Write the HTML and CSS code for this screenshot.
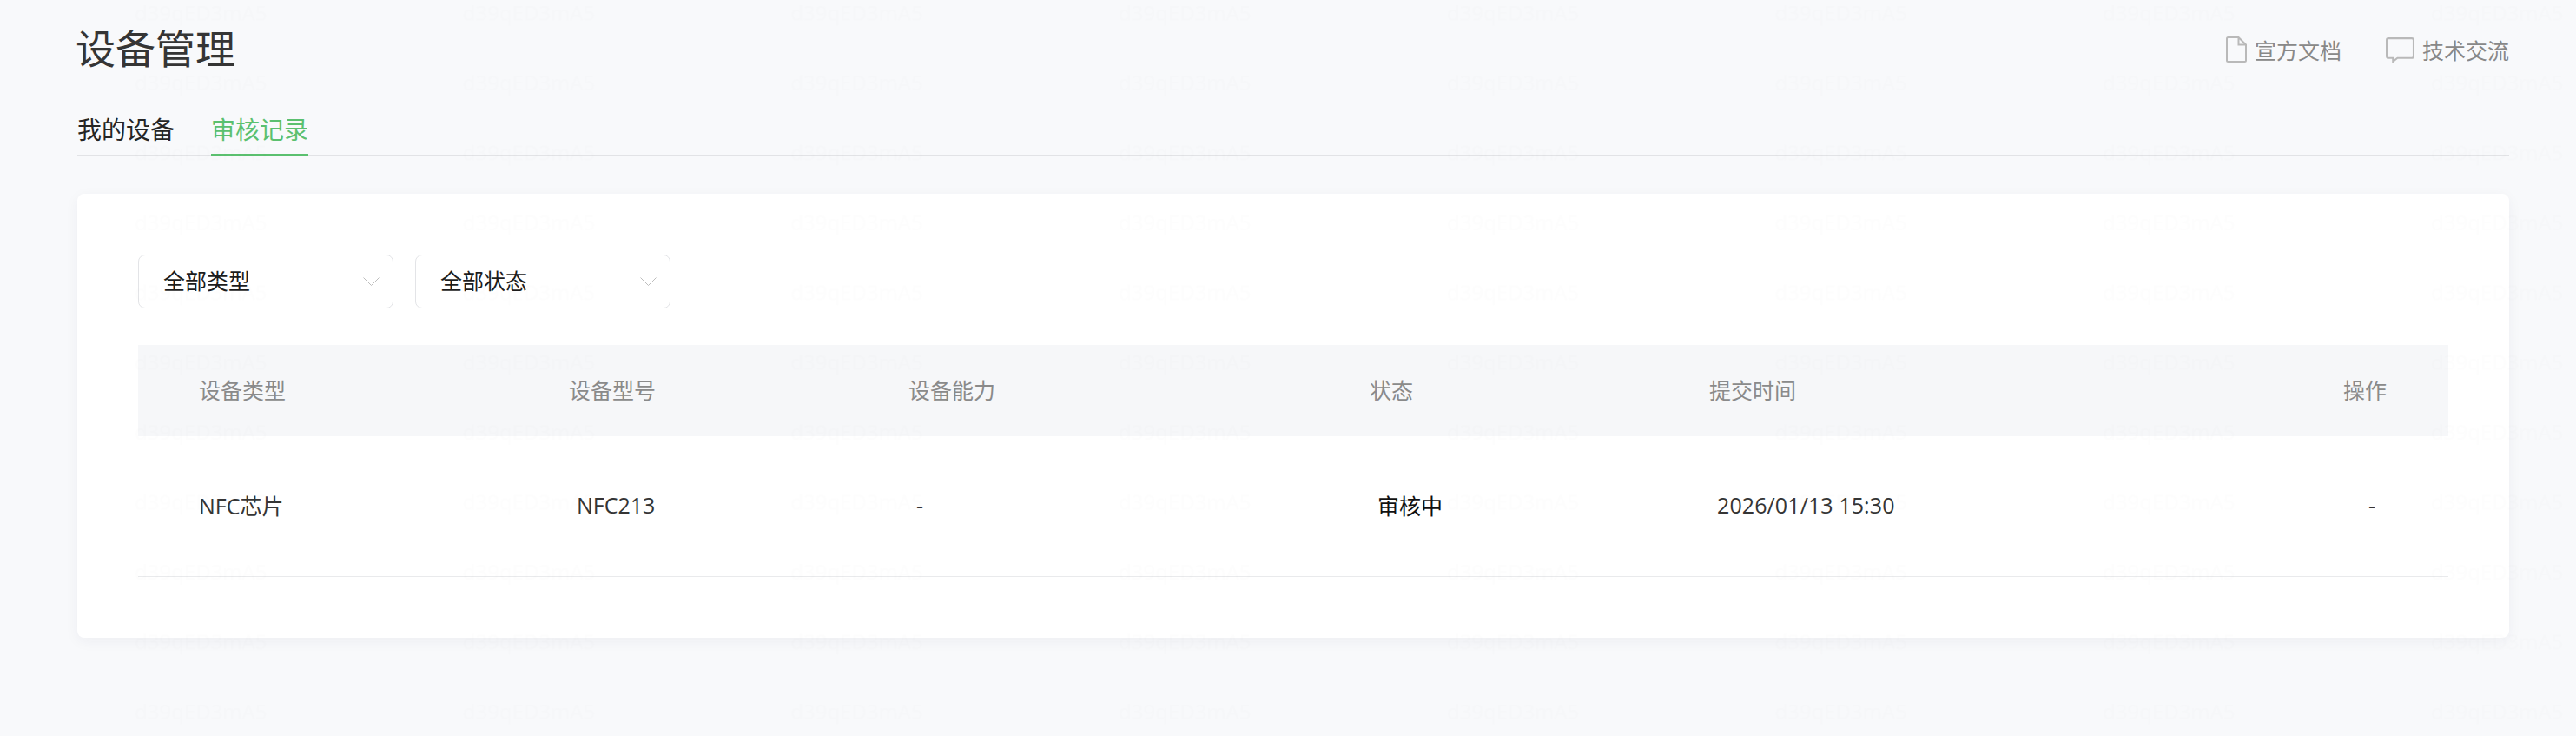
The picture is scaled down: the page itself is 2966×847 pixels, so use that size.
FILE: index.html
```html
<!DOCTYPE html>
<html lang="zh-CN">
<head>
<meta charset="utf-8">
<title>设备管理</title>
<link rel="stylesheet" href="styles.css">
</head>
<body>
<main class="page">
  <header class="topbar">
    <h1 class="title">设备管理</h1>
    <nav class="links">
      <a class="link">
        <svg class="icon-doc" viewBox="0 0 24 30" fill="none"><path d="M2.5 1h12L23 9.5V27.5a1.5 1.5 0 0 1-1.5 1.5h-19A1.5 1.5 0 0 1 1 27.5V2.5A1.5 1.5 0 0 1 2.5 1z M14.5 1v8.5H23"/></svg>
        <span>宣方文档</span>
      </a>
      <a class="link">
        <svg class="icon-chat" viewBox="0 0 32 28" fill="none"><path d="M3 1h26a2 2 0 0 1 2 2v18a2 2 0 0 1-2 2H13l-5 4v-4H3a2 2 0 0 1-2-2V3a2 2 0 0 1 2-2z"/></svg>
        <span>技术交流</span>
      </a>
    </nav>
  </header>
  <div class="tabs">
    <a class="tab">我的设备</a>
    <a class="tab tab-active">审核记录</a>
  </div>
  <section class="card">
    <div class="filters">
      <div class="select"><span>全部类型</span><svg class="chevron" viewBox="0 0 19 10" fill="none"><path d="M.5.5l9 9 9-9"/></svg></div>
      <div class="select"><span>全部状态</span><svg class="chevron" viewBox="0 0 19 10" fill="none"><path d="M.5.5l9 9 9-9"/></svg></div>
    </div>
    <div class="table">
      <div class="row row-head">
        <div class="cell">设备类型</div>
        <div class="cell">设备型号</div>
        <div class="cell">设备能力</div>
        <div class="cell">状态</div>
        <div class="cell">提交时间</div>
        <div class="cell cell-end">操作</div>
      </div>
      <div class="row row-body">
        <div class="cell cell-latin">NFC芯片</div>
        <div class="cell cell-inset">NFC213</div>
        <div class="cell cell-inset">-</div>
        <div class="cell cell-inset cell-strong">审核中</div>
        <div class="cell cell-inset cell-date">2026/01/13 15:30</div>
        <div class="cell cell-end cell-dash">-</div>
      </div>
    </div>
  </section>
</main>
<svg class="watermark" aria-hidden="true">
  <defs>
    <pattern id="wm" x="155" y="-16" width="377.7" height="80.4" patternUnits="userSpaceOnUse">
      <text class="wm-text" x="0" y="40">d39qED3mA5</text>
    </pattern>
  </defs>
  <rect width="100%" height="100%" fill="url(#wm)"/>
</svg>
</body>
</html>
```
FILE: styles.css
```css
* { box-sizing: border-box; }
html, body { margin: 0; height: 100%; }
body {
  background: #f8f9fb;
  color: #353535;
  font-family: "Open Sans", "Noto Sans CJK SC", sans-serif;
  font-size: 25px;
  overflow: hidden;
}
.page { padding: 0 77px 0 89px; }
.topbar {
  display: flex;
  justify-content: space-between;
  align-items: center;
  height: 112px;
  padding-bottom: 2px;
}
.title { margin: 0 0 0 -2px; font-size: 46px; font-weight: 400; line-height: 60px; color: #353535; }
.links { display: flex; gap: 51px; color: #888; padding-top: 4px; }
.link { display: flex; align-items: center; gap: 9px; }
.icon-doc { width: 24px; height: 30px; }
.icon-chat { width: 33px; height: 29px; }
.icon-doc path, .icon-chat path { stroke: #b9b9b9; stroke-width: 2; }
.tabs {
  display: flex;
  gap: 42px;
  height: 67px;
  border-bottom: 1px solid #e2e3e6;
  font-size: 28px;
  line-height: 74px;
  color: #252525;
}
.tab { height: 68px; }
.tab-active { color: #5bc06f; border-bottom: 3px solid #5bc06f; }
.card {
  margin-top: 44px;
  height: 511px;
  padding: 70px 70px 0;
  background: #fff;
  border-radius: 8px;
  box-shadow: 0 4px 16px rgba(30, 40, 70, .05);
}
.filters { display: flex; gap: 25px; }
.select {
  display: flex;
  align-items: center;
  justify-content: space-between;
  width: 294px;
  height: 62px;
  padding: 0 15px 4px 28px;
  border: 1px solid #e3e4e7;
  border-radius: 8px;
  color: #1c1c1c;
}
.chevron { width: 19px; height: 10px; margin-top: 4px; }
.chevron path { stroke: #bdbdbd; stroke-width: 1; }
.table { margin-top: 42px; }
.row {
  display: grid;
  grid-template-columns: 496px 391px 531px 391px 390px 1fr;
  align-items: center;
  padding-bottom: 3px;
}
.row-head { height: 105px; background: #f6f7f9; color: #8a8a8a; }
.row-body { height: 162px; border-bottom: 1px solid #e9eaec; }
.cell:first-child { padding-left: 70px; }
.cell-inset { padding-left: 9px; }
.cell-end { text-align: right; padding-right: 71px; }
.cell-dash { padding-right: 84px; }
.cell-strong { color: #111; }
.cell-latin { letter-spacing: 0; }
.cell-date { letter-spacing: .1px; }
.watermark {
  position: absolute;
  inset: 0;
  width: 100%;
  height: 100%;
  pointer-events: none;
}
.wm-text { font-family: "Open Sans", sans-serif; font-size: 24px; fill: #000; fill-opacity: .008; }
```
